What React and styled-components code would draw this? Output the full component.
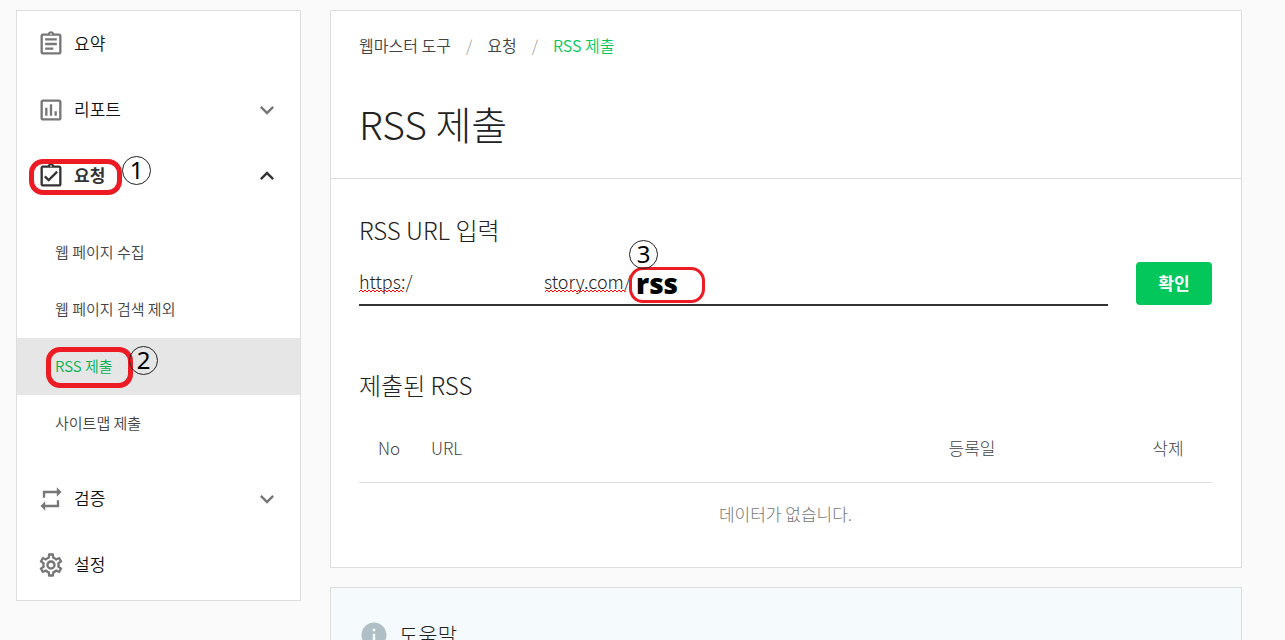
import React, { useState } from "react";
import styled, { createGlobalStyle } from "styled-components";
import {
  MdExpandLess,
  MdExpandMore,
  MdInfo,
  MdOutlineAssessment,
  MdOutlineAssignment,
  MdOutlineAssignmentTurnedIn,
  MdOutlineSettings,
  MdRepeat,
} from "react-icons/md";

const GlobalStyle = createGlobalStyle`
  * {
    box-sizing: border-box;
  }

  body {
    margin: 0;
    background: #fafafa;
    color: #222;
    font-family: "Noto Sans CJK KR", "Noto Sans", sans-serif;
    font-weight: 300;
  }

  button,
  input {
    font-family: inherit;
  }
`;

const Page = styled.div`
  display: flex;
  align-items: flex-start;
  gap: 29px;
  padding: 10px 43px 10px 16px;
`;

const Sidebar = styled.nav`
  flex: none;
  width: 285px;
  padding-bottom: 2px;
  border: 1px solid #dedede;
  background: #fff;
`;

const MenuButton = styled.button`
  position: relative;
  display: flex;
  align-items: center;
  gap: 9px;
  width: 100%;
  height: 66px;
  padding: 0 19px 0 20px;
  border: 0;
  background: none;
  color: ${({ $active }) => ($active ? "#333" : "#777")};
  cursor: pointer;
`;

const MenuLabel = styled.span`
  flex: 1;
  padding-bottom: 2px;
  color: ${({ $active }) => ($active ? "#333" : "#111")};
  font-size: 17px;
  font-weight: ${({ $active }) => ($active ? 700 : 350)};
  line-height: 24px;
  text-align: left;
`;

const SubMenu = styled.ul`
  margin: 0;
  padding: 15px 0 14px;
  list-style: none;
`;

const SubItem = styled.li`
  position: relative;
`;

const SubLink = styled.a`
  display: block;
  padding: 0 0 2px 38px;
  background: ${({ $active }) => ($active ? "#e6e6e6" : "transparent")};
  color: ${({ $active }) => ($active ? "#03b350" : "#444")};
  font-size: 15px;
  font-weight: 350;
  line-height: 55px;
  text-decoration: none;
`;

const Main = styled.main`
  flex: 1;
  min-width: 0;
`;

const Panel = styled.section`
  border: 1px solid #dedede;
  background: #fff;
`;

const PanelHeader = styled.header`
  padding: 22px 28px 25px;
  border-bottom: 1px solid #dedede;
`;

const Breadcrumb = styled.div`
  display: flex;
  gap: 15px;
  color: #999;
  font-size: 16px;
  line-height: 24px;
`;

const Crumb = styled.a`
  color: ${({ $active }) => ($active ? "#03c75a" : "#444")};
  font-weight: 350;
  text-decoration: none;
`;

const Title = styled.h1`
  margin: 36px 0 0;
  font-size: 39px;
  font-weight: 300;
  line-height: 60px;
`;

const PanelBody = styled.div`
  padding: 33px 29px 24px 28px;
`;

const SectionLabel = styled.label`
  display: block;
  font-size: 24px;
  line-height: 36px;
`;

const SectionTitle = styled.h2`
  margin: 61px 0 0;
  font-size: 24px;
  font-weight: 300;
  line-height: 36px;
`;

const Form = styled.form`
  display: flex;
  align-items: flex-start;
  gap: 28px;
  margin-top: 14px;
`;

const Field = styled.div`
  position: relative;
  display: flex;
  flex: 1;
  height: 44px;
  border-bottom: 2px solid #333;
`;

const UrlInput = styled.input`
  flex: ${({ $width }) => ($width ? "none" : 1)};
  width: ${({ $width }) => $width || "auto"};
  min-width: 0;
  padding: 0 0 4px;
  border: 0;
  outline: 0;
  background: none;
  color: #222;
  font-size: 18px;
  font-weight: 300;
`;

const SquiggleLine = styled.svg`
  position: absolute;
  top: 27px;
  left: ${({ $left }) => $left};
`;

const SubmitButton = styled.button`
  width: 76px;
  height: 43px;
  padding: 0 0 2px;
  border: 0;
  border-radius: 4px;
  background: #03c75a;
  color: #fff;
  font-size: 17px;
  font-weight: 700;
  cursor: pointer;
`;

const Table = styled.table`
  width: 100%;
  margin-top: 10px;
  border-collapse: separate;
  border-spacing: 0;
  table-layout: fixed;
  font-size: 17px;
`;

const HeadCell = styled.th`
  width: ${({ $width }) => $width || "auto"};
  height: 70px;
  padding: 0 12px;
  border-bottom: 1px solid #dedede;
  color: #444;
  font-weight: 300;
  text-align: ${({ $align }) => $align || "center"};
`;

const EmptyCell = styled.td`
  height: 60px;
  padding: 0;
  color: #777;
  text-align: center;
`;

const HelpPanel = styled(Panel)`
  display: flex;
  gap: 10px;
  margin-top: 19px;
  padding: 30px 28px;
  background: #f5fafc;
  color: #b0bec5;
`;

const HelpIcon = styled(MdInfo)`
  margin-top: 2px;
  font-size: 30px;
`;

const HelpTitle = styled.h2`
  margin: 0;
  color: #222;
  font-size: 21px;
  font-weight: 300;
  line-height: 32px;
`;

const Mark = styled.span`
  position: absolute;
  top: ${({ $top }) => $top};
  left: ${({ $left }) => $left};
  width: ${({ $width }) => $width};
  height: ${({ $height }) => $height};
  border: ${({ $thin }) => ($thin ? "3px" : "5px")} solid #ed1c24;
  border-radius: 14px;
  pointer-events: none;
`;

const StepBadge = styled.span`
  position: absolute;
  top: ${({ $top }) => $top};
  left: ${({ $left }) => $left};
  width: 29px;
  height: 29px;
  border: 1px solid #222;
  border-radius: 50%;
  color: #000;
  font-family: "Noto Sans", sans-serif;
  font-size: 24px;
  font-weight: 400;
  line-height: 26px;
  text-align: center;
  pointer-events: none;
`;

const PathNote = styled.strong`
  position: absolute;
  top: 4px;
  left: 277px;
  color: #000;
  font-family: "Open Sans", sans-serif;
  font-size: 28px;
  font-weight: 800;
  line-height: 34px;
  pointer-events: none;
`;

const subPages = ["웹 페이지 수집", "웹 페이지 검색 제외", "RSS 제출", "사이트맵 제출"];

const Squiggle = ({ left, width }) => {
  let d = "M0 3";
  for (let x = 2; x <= width; x += 2) {
    d += ` L${x} ${x % 4 ? 1 : 3}`;
  }
  return (
    <SquiggleLine $left={left} width={width} height="4" aria-hidden="true">
      <path d={d} fill="none" stroke="#f00" />
    </SquiggleLine>
  );
};

const MenuItem = ({ icon: Icon, label, arrow: Arrow, active, children }) => (
  <MenuButton type="button" $active={active}>
    <Icon size={28} />
    <MenuLabel $active={active}>{label}</MenuLabel>
    {Arrow && <Arrow size={28} />}
    {children}
  </MenuButton>
);

const App = () => {
  const [protocol, setProtocol] = useState("https:/");
  const [host, setHost] = useState("story.com/");

  return (
    <>
      <GlobalStyle />
      <Page>
        <Sidebar>
          <MenuItem icon={MdOutlineAssignment} label="요약" />
          <MenuItem
            icon={MdOutlineAssessment}
            label="리포트"
            arrow={MdExpandMore}
          />
          <MenuItem
            icon={MdOutlineAssignmentTurnedIn}
            label="요청"
            arrow={MdExpandLess}
            active
          >
            <Mark $top="16px" $left="12px" $width="93px" $height="36px" />
            <StepBadge $top="13px" $left="105px">
              1
            </StepBadge>
          </MenuItem>
          <SubMenu>
            {subPages.map((name) => (
              <SubItem key={name}>
                <SubLink href="#" $active={name === "RSS 제출"}>
                  {name}
                </SubLink>
                {name === "RSS 제출" && (
                  <>
                    <Mark
                      $top="9px"
                      $left="29px"
                      $width="87px"
                      $height="41px"
                    />
                    <StepBadge $top="8px" $left="112px">
                      2
                    </StepBadge>
                  </>
                )}
              </SubItem>
            ))}
          </SubMenu>
          <MenuItem icon={MdRepeat} label="검증" arrow={MdExpandMore} />
          <MenuItem icon={MdOutlineSettings} label="설정" />
        </Sidebar>

        <Main>
          <Panel>
            <PanelHeader>
              <Breadcrumb>
                <Crumb href="#">웹마스터 도구</Crumb>
                <span>/</span>
                <Crumb href="#">요청</Crumb>
                <span>/</span>
                <Crumb href="#" $active>
                  RSS 제출
                </Crumb>
              </Breadcrumb>
              <Title>RSS 제출</Title>
            </PanelHeader>
            <PanelBody>
              <SectionLabel htmlFor="rss-url">RSS URL 입력</SectionLabel>
              <Form onSubmit={(e) => e.preventDefault()}>
                <Field>
                  <UrlInput
                    id="rss-url"
                    $width="185px"
                    spellCheck={false}
                    value={protocol}
                    onChange={(e) => setProtocol(e.target.value)}
                  />
                  <UrlInput
                    aria-label="RSS URL"
                    spellCheck={false}
                    value={host}
                    onChange={(e) => setHost(e.target.value)}
                  />
                  <Squiggle left="0" width={44} />
                  <Squiggle left="186px" width={80} />
                  <Mark
                    $thin
                    $top="5px"
                    $left="270px"
                    $width="76px"
                    $height="36px"
                  />
                  <PathNote>rss</PathNote>
                  <StepBadge $top="-22px" $left="270px">
                    3
                  </StepBadge>
                </Field>
                <SubmitButton type="submit">확인</SubmitButton>
              </Form>

              <SectionTitle>제출된 RSS</SectionTitle>
              <Table>
                <thead>
                  <tr>
                    <HeadCell $width="60px">No</HeadCell>
                    <HeadCell $align="left">URL</HeadCell>
                    <HeadCell $width="304px">등록일</HeadCell>
                    <HeadCell $width="88px">삭제</HeadCell>
                  </tr>
                </thead>
                <tbody>
                  <tr>
                    <EmptyCell colSpan={4}>데이터가 없습니다.</EmptyCell>
                  </tr>
                </tbody>
              </Table>
            </PanelBody>
          </Panel>

          <HelpPanel>
            <HelpIcon />
            <HelpTitle>도움말</HelpTitle>
          </HelpPanel>
        </Main>
      </Page>
    </>
  );
};

export default App;
